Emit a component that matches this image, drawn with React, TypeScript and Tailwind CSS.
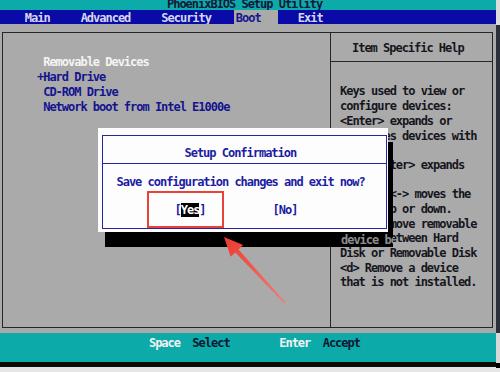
const helpLines = [
  "Keys used to view or",
  "configure devices:",
  "<Enter> expands or",
  "collapses devices with",
  "a + or -",
  "<Ctrl+Enter> expands",
  "all",
  "<+> and <-> moves the",
  "device up or down.",
  "<n> May move removable",
  "device between Hard",
  "Disk or Removable Disk",
  "<d> Remove a device",
  "that is not installed.",
];

function HelpPane() {
  return (
    <div className="flex-1 flex flex-col">
      <div className="h-[29px] border-b border-[#262626] pt-[8px] pl-[21px] text-[#161620]">
        Item Specific Help
      </div>
      <div className="pt-[22.5px] pl-[9px] text-[#161620]">
        {helpLines.map((line) => (
          <div key={line} className="h-[14.7px]">
            {line}
          </div>
        ))}
      </div>
    </div>
  );
}

function BootPane() {
  return (
    <div className="w-[328px] border-r border-[#262626] pt-[22.5px] pl-[34px]">
      <div className="h-[14.7px] text-[#f4f4f4]"> Removable Devices</div>
      <div className="h-[14.7px] text-[#14148e]">+Hard Drive</div>
      <div className="h-[14.7px] text-[#14148e]"> CD-ROM Drive</div>
      <div className="h-[14.7px] text-[#14148e]"> Network boot from Intel E1000e</div>
    </div>
  );
}

function ConfirmDialog() {
  return (
    <>
      <div className="absolute left-[98px] top-[128px] w-[290px] h-[104px] bg-[#fdfdfd] pt-[7px] pl-[3.5px] pr-[1.5px] pb-[3.5px] z-10">
        <div className="h-full border border-[#2626a4] flex flex-col text-[#1c1ca4]">
          <div className="h-[28px] border-b border-[#2626a4] pt-[9.5px] pl-[82px]">Setup Confirmation</div>
          <div className="pt-[10.5px] pl-[14px]">Save configuration changes and exit now?</div>
          <div className="mt-[14px] flex">
            <span className="ml-[72px]">
              [<span className="bg-black text-white">Yes</span>]
            </span>
            <span className="ml-[67px]">[No]</span>
          </div>
        </div>
      </div>
      {/* text-mode drop shadow: covered chars show dim */}
      <div className="absolute left-[388px] top-[142px] w-[5px] h-[90px] bg-black z-10" />
      <div className="absolute left-[105px] top-[232px] w-[288px] h-[14.5px] bg-black z-10 overflow-hidden pl-[236px] pt-[0.5px] text-[#8e8e8e]">
        device be
      </div>
    </>
  );
}

function Annotation() {
  return (
    <>
      <div className="absolute left-[147px] top-[191px] w-[77px] h-[37px] border-2 border-[#e8423a] z-30" />
      <svg className="absolute left-0 top-0 z-30 pointer-events-none" width="500" height="372" viewBox="0 0 500 372">
        <defs>
          <linearGradient id="arr" x1="224" y1="237" x2="285" y2="303" gradientUnits="userSpaceOnUse">
            <stop offset="0" stopColor="#ec3a30" />
            <stop offset="1" stopColor="#f27d72" />
          </linearGradient>
        </defs>
        <polygon
          points="224,237 243.1,245.1 238.5,249.4 285.6,302.5 284.4,303.5 235.3,252.4 230.7,256.7"
          fill="url(#arr)"
        />
      </svg>
    </>
  );
}

export default function App() {
  return (
    <div className="relative w-[500px] h-[372px] overflow-hidden flex bg-[#e6e6e6] font-['DejaVu_Sans_Mono',monospace] font-bold text-[12px] leading-[14.7px] tracking-[-1.02px] whitespace-pre">
      <div className="w-[496px] flex flex-col">
        <div className="-mt-[5px] h-[14.7px] bg-[#0caaa9] text-[#10183a] pl-[167px] pt-[1.5px]">PhoenixBIOS Setup Utility</div>
        <div className="h-[14.7px] bg-[#0a0aa6] text-[#d4d8ec] flex pt-[1.5px]">
          <span>{"    Main     Advanced     Security   "}</span>
          <span className="ml-[4.6px] w-[44px] pl-[1.6px] -mt-[1.5px] pt-[1.5px] bg-[#aaaaaa] text-[#18188c]">Boot</span>
          <span className="ml-[19.6px]">Exit</span>
        </div>
        <div className="h-[308.7px] bg-[#aaaaaa] pt-[7.6px] pl-[2px]">
          <div className="w-[491px] h-[296px] border border-[#262626] flex">
            <BootPane />
            <HelpPane />
          </div>
        </div>
        <div className="h-[29.4px] bg-[#0caaa9]">
          <div className="h-[14.7px] pt-[2.5px]">
            <span>{"                        "}</span>
            <span className="text-[#f2f2f2]">Space</span>
            <span className="text-[#0c1830]">{"  Select"}</span>
            <span>{"        "}</span>
            <span className="text-[#f2f2f2]">Enter</span>
            <span className="text-[#0c1830]">{"  Accept"}</span>
          </div>
        </div>
        <div className="h-[4.5px] bg-[#0a0a0a]" />
      </div>
      <div className="w-[4px] flex flex-col">
        <div className="h-[25px] bg-[#dcdcdc]" />
        <div className="h-[308px] bg-[#2c303a]" />
        <div className="h-[30px] bg-[#d8d8d8]" />
        <div className="h-[5px] bg-black" />
      </div>
      <ConfirmDialog />
      <Annotation />
    </div>
  );
}
